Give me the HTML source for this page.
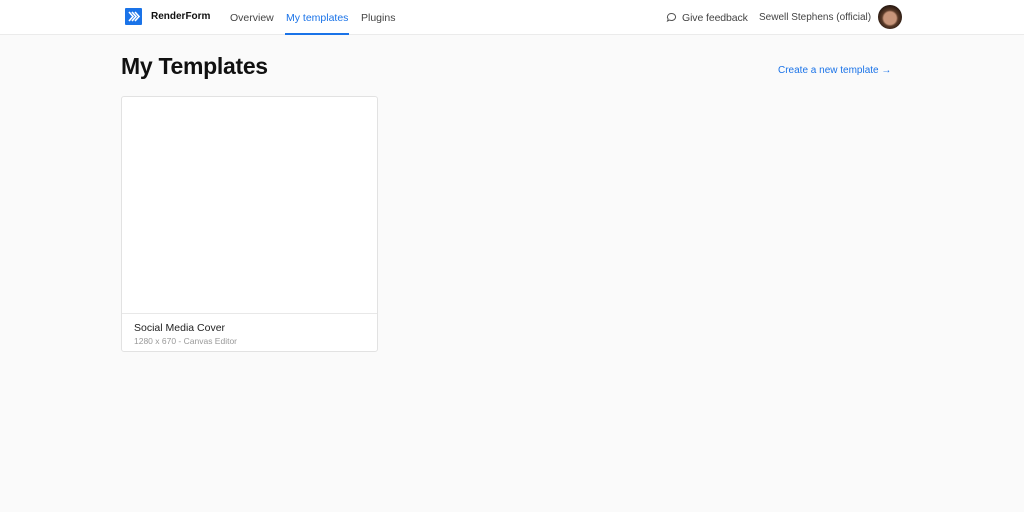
<!DOCTYPE html>
<html><head><style>
*{margin:0;padding:0;box-sizing:border-box}
body{width:1024px;height:512px;background:#fafafa;font-family:"Liberation Sans",sans-serif;position:relative;overflow:hidden}
.nav{position:absolute;top:0;left:0;width:1024px;height:35px;background:#fff;border-bottom:1px solid #ebebeb}
.t{position:absolute;font-size:10.5px;color:#444;white-space:nowrap}
</style></head><body>
<div class="nav">
<div style="position:absolute;left:125px;top:8px;width:17px;height:17px;background:#1a73e8;border-radius:1px">
<svg width="17" height="17" viewBox="0 0 17 17"><path d="M4 4l4 4.5-4 4.5M7 4l4 4.5-4 4.5M10 4l4 4.5-4 4.5" stroke="#fff" stroke-width="1.6" fill="none"/></svg></div>
<div class="t" style="left:151px;top:11px;font-weight:bold;color:#111;font-size:10px">RenderForm</div>
<div class="t" style="left:230px;top:12px">Overview</div>
<div class="t" style="left:286px;top:12px;color:#1a73e8">My templates</div>
<div style="position:absolute;left:285px;top:33px;width:64px;height:2px;background:#1a73e8"></div>
<div class="t" style="left:361px;top:12px">Plugins</div>
<svg style="position:absolute;left:666px;top:12px" width="11" height="11" viewBox="0 0 11 11"><path d="M5.5 1.5a4 3.5 0 1 1-2 6.5l-2 1 .7-2A4 3.5 0 0 1 5.5 1.5z" fill="none" stroke="#555" stroke-width="1"/></svg>
<div class="t" style="left:682px;top:12px;letter-spacing:-0.1px">Give feedback</div>
<div class="t" style="left:759px;top:12px;font-size:10px">Sewell Stephens (official)</div>
<div style="position:absolute;left:878px;top:5px;width:24px;height:24px;border-radius:50%;background:radial-gradient(circle at 50% 55%,#c8957a 0 35%,#5a3a28 45%,#2a1a12 70%)"></div>
</div>
<div style="position:absolute;left:121px;top:53px;font-size:23px;font-weight:bold;color:#111;letter-spacing:-0.3px">My Templates</div>
<div class="t" style="left:778px;top:65px;color:#1a73e8;font-size:10px">Create a new template →</div>
<div style="position:absolute;left:121px;top:96px;width:257px;height:256px;background:#fff;border:1px solid #e2e2e2;border-radius:3px">
<div style="position:absolute;left:0;top:216px;width:100%;border-top:1px solid #e8e8e8"></div>
<div class="t" style="left:12px;top:225px;color:#222">Social Media Cover</div>
<div class="t" style="left:12px;top:239px;color:#999;font-size:8.5px">1280 x 670 - Canvas Editor</div>
</div>
</body></html>
